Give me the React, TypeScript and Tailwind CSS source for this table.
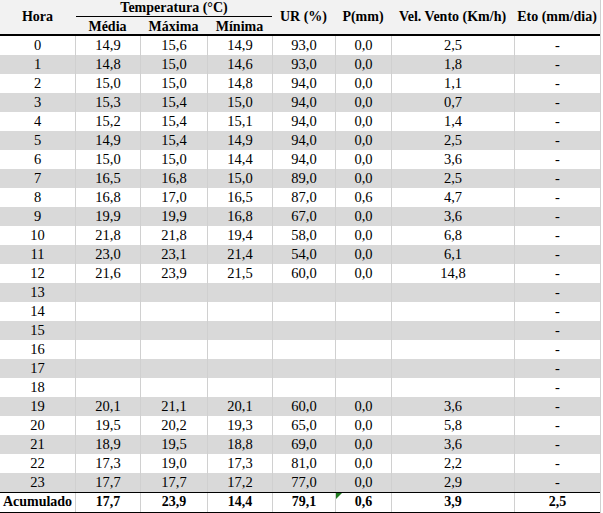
const rows: string[][] = [
  ['0', '14,9', '15,6', '14,9', '93,0', '0,0', '2,5', '-'],
  ['1', '14,8', '15,0', '14,6', '93,0', '0,0', '1,8', '-'],
  ['2', '15,0', '15,0', '14,8', '94,0', '0,0', '1,1', '-'],
  ['3', '15,3', '15,4', '15,0', '94,0', '0,0', '0,7', '-'],
  ['4', '15,2', '15,4', '15,1', '94,0', '0,0', '1,4', '-'],
  ['5', '14,9', '15,4', '14,9', '94,0', '0,0', '2,5', '-'],
  ['6', '15,0', '15,0', '14,4', '94,0', '0,0', '3,6', '-'],
  ['7', '16,5', '16,8', '15,0', '89,0', '0,0', '2,5', '-'],
  ['8', '16,8', '17,0', '16,5', '87,0', '0,6', '4,7', '-'],
  ['9', '19,9', '19,9', '16,8', '67,0', '0,0', '3,6', '-'],
  ['10', '21,8', '21,8', '19,4', '58,0', '0,0', '6,8', '-'],
  ['11', '23,0', '23,1', '21,4', '54,0', '0,0', '6,1', '-'],
  ['12', '21,6', '23,9', '21,5', '60,0', '0,0', '14,8', '-'],
  ['13', '', '', '', '', '', '', '-'],
  ['14', '', '', '', '', '', '', '-'],
  ['15', '', '', '', '', '', '', '-'],
  ['16', '', '', '', '', '', '', '-'],
  ['17', '', '', '', '', '', '', '-'],
  ['18', '', '', '', '', '', '', '-'],
  ['19', '20,1', '21,1', '20,1', '60,0', '0,0', '3,6', '-'],
  ['20', '19,5', '20,2', '19,3', '65,0', '0,0', '5,8', '-'],
  ['21', '18,9', '19,5', '18,8', '69,0', '0,0', '3,6', '-'],
  ['22', '17,3', '19,0', '17,3', '81,0', '0,0', '2,2', '-'],
  ['23', '17,7', '17,7', '17,2', '77,0', '0,0', '2,9', '-'],
];

const totals = ['Acumulado', '17,7', '23,9', '14,4', '79,1', '0,6', '3,9', '2,5'];

const cols = 'grid grid-cols-[75px_65px_67px_65px_63px_56px_123px_86px]';

export default function App() {
  return (
    <div className="w-[603px] h-[513px] bg-white text-black text-[14px] [font-family:'Liberation_Serif','Times_New_Roman',serif] overflow-hidden">
      <div className="w-[601px] border-r border-[#d0d0d0]">
        {/* Header */}
        <div className={`${cols} grid-rows-[17px_17px] bg-[#f2f2f2] border-b-2 border-black font-bold leading-none`}>
          <div className="col-start-1 row-start-1 row-span-2 flex items-center justify-center">Hora</div>
          <div className="col-start-2 col-span-3 row-start-1 flex items-center justify-center border-b border-black ml-[1px]">
            Temperatura (°C)
          </div>
          <div className="col-start-5 row-start-1 row-span-2 flex items-center justify-center">UR (%)</div>
          <div className="col-start-6 row-start-1 row-span-2 flex items-center justify-center">P(mm)</div>
          <div className="col-start-7 row-start-1 row-span-2 flex items-center justify-center whitespace-nowrap">Vel. Vento (Km/h)</div>
          <div className="col-start-8 row-start-1 row-span-2 flex items-center justify-center whitespace-nowrap">Eto (mm/dia)</div>
          <div className="col-start-2 row-start-2 flex items-center justify-center pt-[3px]">Média</div>
          <div className="col-start-3 row-start-2 flex items-center justify-center pt-[3px]">Máxima</div>
          <div className="col-start-4 row-start-2 flex items-center justify-center pt-[3px]">Mínima</div>
        </div>

        {/* Body */}
        {rows.map((r, i) => (
          <div key={i} className={`${cols} h-[19px] leading-[19px] text-[14.5px] ${i % 2 === 1 ? 'bg-[#d9d9d9]' : 'bg-white'}`}>
            {r.map((v, j) => (
              <div key={j} className={`text-center ${j > 0 ? 'border-l border-[#d0d0d0]' : ''}`}>
                {v}
              </div>
            ))}
          </div>
        ))}

        {/* Totals */}
        <div className={`${cols} h-[21px] leading-[18px] border-y border-black font-bold`}>
          {totals.map((v, j) => (
            <div key={j} className={`relative text-center ${j > 0 ? 'border-l border-[#d0d0d0]' : ''}`}>
              {j === 5 && (
                <svg className="absolute left-0 top-0" width="6" height="6" viewBox="0 0 6 6">
                  <polygon points="0,0 6,0 0,6" fill="#1f7a1f" />
                </svg>
              )}
              {v}
            </div>
          ))}
        </div>
      </div>
    </div>
  );
}
